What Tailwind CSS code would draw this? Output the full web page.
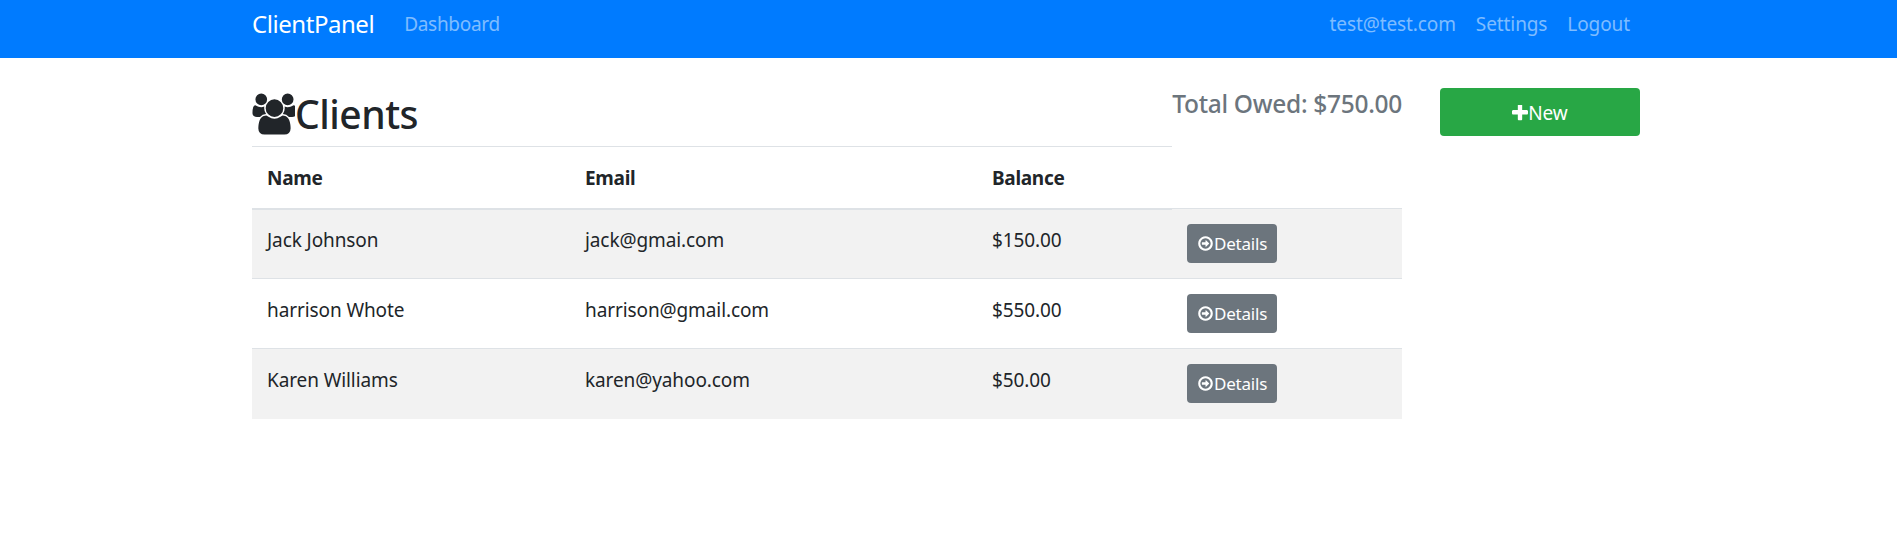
<!DOCTYPE html>
<html lang="en">
<head>
    <meta charset="UTF-8">
    <title>ClientPanel</title>
    <script src="https://cdn.jsdelivr.net/npm/@tailwindcss/browser@4"></script>
</head>
<body class="bg-white font-['Noto_Sans',sans-serif] text-[19px] leading-[24px] text-[#212529] tracking-[-0.1px]">
<nav class="bg-[#007bff] h-[58px]">
    <div class="mx-auto w-[1423px] px-[15px] h-full flex items-center pb-[10px]">
        <a class="text-white text-[24px] leading-[30px] tracking-[-0.45px] mr-[30px]">ClientPanel</a>
        <a class="text-white/50 tracking-[-0.3px]">Dashboard</a>
        <div class="ml-auto flex gap-[20px] pr-[15px] text-white/50">
            <a>test@test.com</a>
            <a>Settings</a>
            <a>Logout</a>
        </div>
    </div>
</nav>
<main class="mx-auto w-[1423px] px-[15px] pt-[30px] flex">
    <div class="w-[1150px]">
        <div class="flex justify-between h-[58px]">
            <h2 class="text-[39px] leading-[48px] font-medium flex items-center h-[52px] tracking-[-0.5px]">
                <svg class="w-[44px] h-[42px] -ml-px fill-current" viewBox="0 0 1920 1792"><path d="M657 896q-162 5-265 128h-134q-82 0-138-40.500t-56-118.500q0-353 124-353 6 0 43.500 21t97.500 42.500 119 21.500q67 0 133-23-5 37-5 66 0 139 81 256zm1071 637q0 120-73 189.500t-194 69.500h-874q-121 0-194-69.500t-73-189.500q0-53 3.500-103.500t14-109 26.500-108.500 43-97.500 62-81 85.500-53.500 111.500-20q10 0 43 21.500t73 48 107 48 135 21.500 135-21.500 107-48 73-48 43-21.500q61 0 111.500 20t85.500 53.500 62 81 43 97.500 26.500 108.500 14 109 3.500 103.500zm-1024-1277q0 106-75 181t-181 75-181-75-75-181 75-181 181-75 181 75 75 181zm704 384q0 159-112.500 271.500t-271.500 112.500-271.500-112.500-112.500-271.500 112.500-271.500 271.500-112.500 271.500 112.500 112.500 271.500zm576 225q0 78-56 118.500t-138 40.500h-134q-103-123-265-128 81-117 81-256 0-29-5-66 66 23 133 23 59 0 119-21.500t97.500-42.500 43.500-21q124 0 124 353zm-128-609q0 106-75 181t-181 75-181-75-75-181 75-181 181-75 181 75 75 181z"/></svg>Clients
            </h2>
            <h4 class="text-[24.5px] leading-[29px] pt-[1px] text-[#6c757d] font-medium tracking-[-0.3px]">Total Owed: $750.00</h4>
        </div>
        <table class="w-[1150px] table-fixed border-collapse">
            <thead>
                <tr class="h-[62px] text-left font-bold tracking-[-0.3px]">
                    <th class="w-[317px] pl-[15px] pt-[2px] border-t border-b-2 border-[#dee2e6]">Name</th>
                    <th class="w-[407px] pl-[16px] pt-[2px] border-t border-b-2 border-[#dee2e6]">Email</th>
                    <th class="w-[196px] pl-[16px] pt-[2px] border-t border-b-2 border-[#dee2e6]">Balance</th>
                    <th class="w-[230px]"></th>
                </tr>
            </thead>
            <tbody>
                <tr class="h-[70px] bg-[#f2f2f2] border-t border-[#dee2e6]">
                    <td class="pl-[15px] align-top pt-[18px]">Jack Johnson</td>
                    <td class="pl-[16px] align-top pt-[18px]">jack@gmai.com</td>
                    <td class="pl-[16px] align-top pt-[18px]">$150.00</td>
                    <td class="pl-[15px] align-top pt-[15px]">
                        <a class="inline-flex items-center h-[39px] px-[10px] bg-[#6c757d] rounded-[4px] text-white text-[17px] tracking-[-0.2px]">
                            <svg class="w-[17px] h-[17px] fill-current" viewBox="0 0 1792 1792"><path d="M1280 896q0 14-9 23l-320 320q-9 9-23 9-13 0-22.500-9.500t-9.500-22.500v-192h-352q-13 0-22.500-9.500t-9.500-22.500v-192q0-13 9.500-22.500t22.500-9.500h352v-192q0-14 9-23t23-9q12 0 24 10l319 319q9 9 9 23zm160 0q0-148-73-273t-198-198-273-73-273 73-198 198-73 273 73 273 198 198 273 73 273-73 198-198 73-273zm224 0q0 209-103 385.500t-279.500 279.500-385.500 103-385.500-103-279.500-279.500-103-385.500 103-385.500 279.500-279.500 385.500-103 385.500 103 279.500 279.500 103 385.500z"/></svg>Details
                        </a>
                    </td>
                </tr>
                <tr class="h-[70px] border-t border-[#dee2e6]">
                    <td class="pl-[15px] align-top pt-[19px]">harrison Whote</td>
                    <td class="pl-[16px] align-top pt-[19px]">harrison@gmail.com</td>
                    <td class="pl-[16px] align-top pt-[19px]">$550.00</td>
                    <td class="pl-[15px] align-top pt-[15px]">
                        <a class="inline-flex items-center h-[39px] px-[10px] bg-[#6c757d] rounded-[4px] text-white text-[17px] tracking-[-0.2px]">
                            <svg class="w-[17px] h-[17px] fill-current" viewBox="0 0 1792 1792"><path d="M1280 896q0 14-9 23l-320 320q-9 9-23 9-13 0-22.500-9.500t-9.500-22.500v-192h-352q-13 0-22.500-9.500t-9.500-22.500v-192q0-13 9.500-22.500t22.500-9.500h352v-192q0-14 9-23t23-9q12 0 24 10l319 319q9 9 9 23zm160 0q0-148-73-273t-198-198-273-73-273 73-198 198-73 273 73 273 198 198 273 73 273-73 198-198 73-273zm224 0q0 209-103 385.500t-279.500 279.500-385.500 103-385.500-103-279.500-279.500-103-385.500 103-385.500 279.500-279.500 385.500-103 385.500 103 279.500 279.500 103 385.500z"/></svg>Details
                        </a>
                    </td>
                </tr>
                <tr class="h-[70px] bg-[#f2f2f2] border-t border-[#dee2e6]">
                    <td class="pl-[15px] align-top pt-[19px]">Karen Williams</td>
                    <td class="pl-[16px] align-top pt-[19px]">karen@yahoo.com</td>
                    <td class="pl-[16px] align-top pt-[19px]">$50.00</td>
                    <td class="pl-[15px] align-top pt-[15px]">
                        <a class="inline-flex items-center h-[39px] px-[10px] bg-[#6c757d] rounded-[4px] text-white text-[17px] tracking-[-0.2px]">
                            <svg class="w-[17px] h-[17px] fill-current" viewBox="0 0 1792 1792"><path d="M1280 896q0 14-9 23l-320 320q-9 9-23 9-13 0-22.500-9.500t-9.500-22.500v-192h-352q-13 0-22.500-9.500t-9.500-22.500v-192q0-13 9.500-22.500t22.500-9.500h352v-192q0-14 9-23t23-9q12 0 24 10l319 319q9 9 9 23zm160 0q0-148-73-273t-198-198-273-73-273 73-198 198-73 273 73 273 198 198 273 73 273-73 198-198 73-273zm224 0q0 209-103 385.500t-279.500 279.500-385.500 103-385.500-103-279.500-279.500-103-385.500 103-385.500 279.500-279.500 385.500-103 385.500 103 279.500 279.500 103 385.500z"/></svg>Details
                        </a>
                    </td>
                </tr>
            </tbody>
        </table>
    </div>
    <div class="ml-[38px]">
        <a class="flex items-center justify-center w-[200px] h-[48px] pt-[1px] bg-[#28a745] rounded-[4px] text-white text-[19px]">
            <svg class="w-[16px] h-[16px] fill-current" viewBox="0 0 1408 1408"><path transform="translate(-192 -192)" d="M1600 736v192q0 40-28 68t-68 28h-416v416q0 40-28 68t-68 28h-192q-40 0-68-28t-28-68v-416h-416q-40 0-68-28t-28-68v-192q0-40 28-68t68-28h416v-416q0-40 28-68t68-28h192q40 0 68 28t28 68v416h416q40 0 68 28t28 68z"/></svg>New
        </a>
    </div>
</main>
</body>
</html>
